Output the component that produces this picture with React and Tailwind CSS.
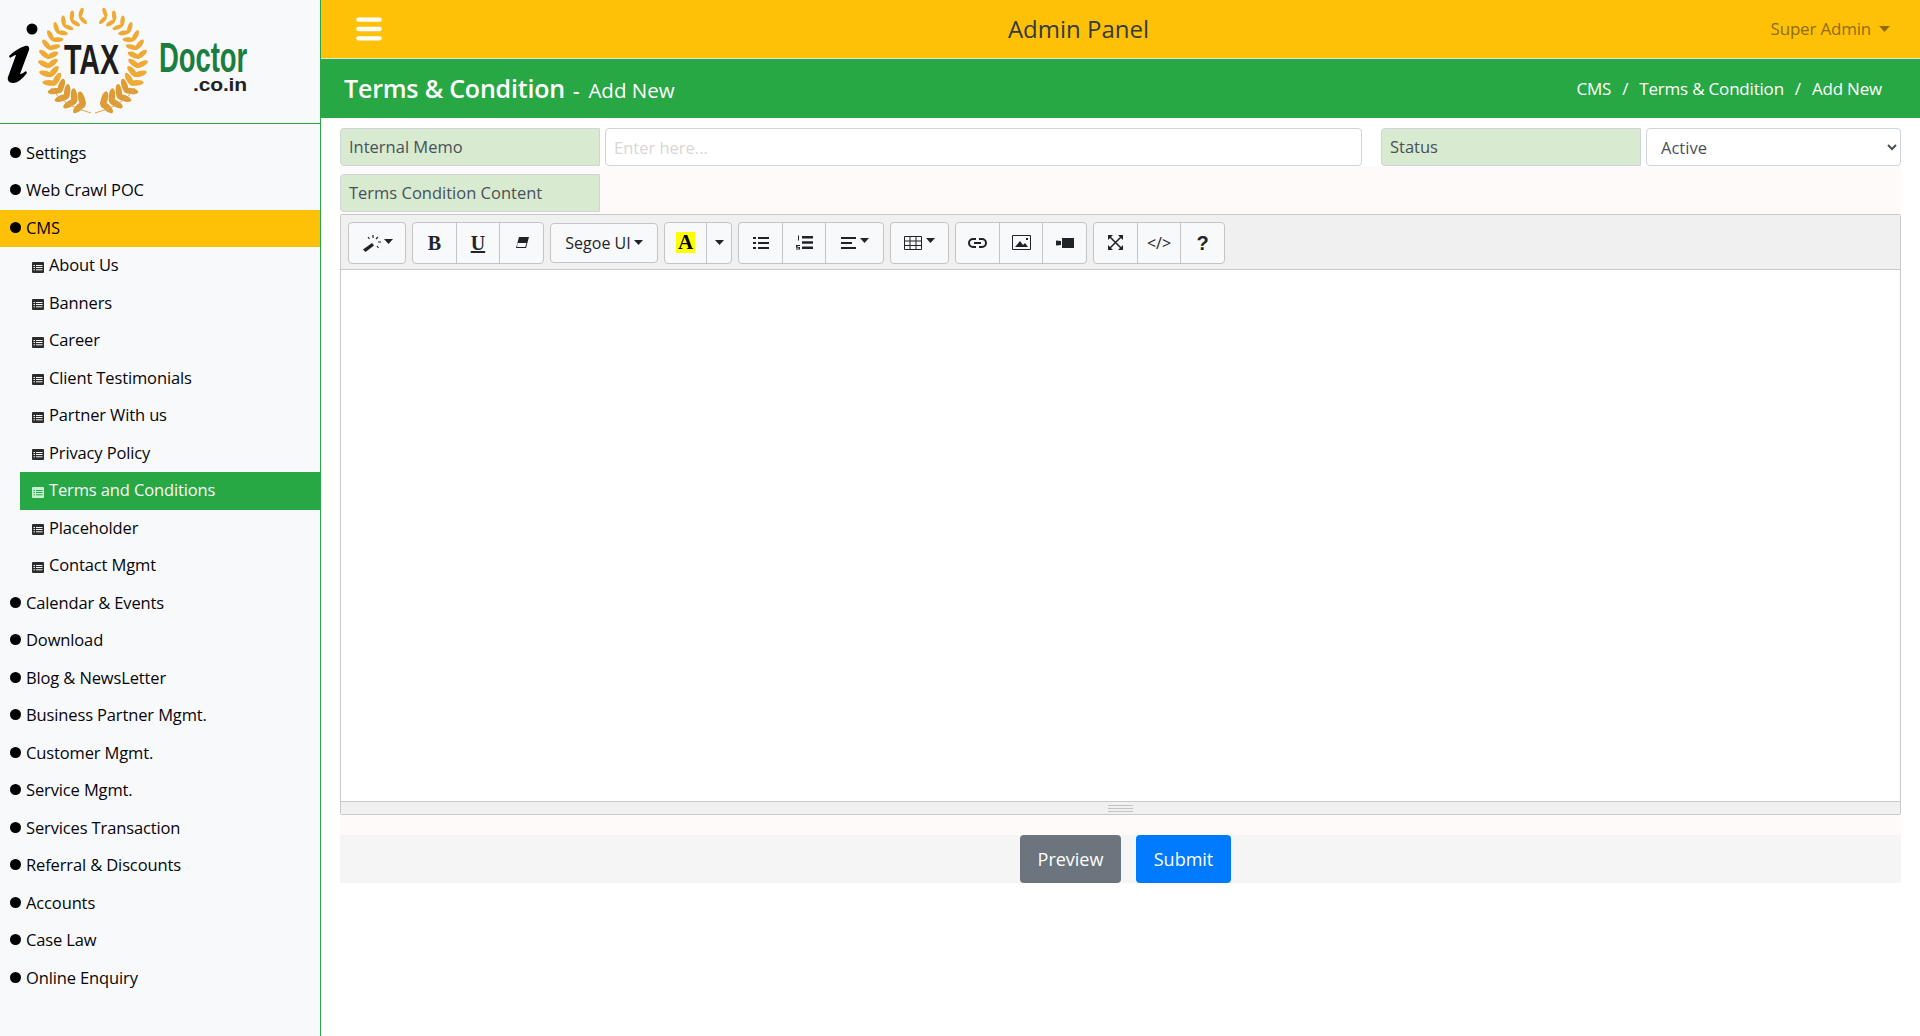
import React from 'react';
import { Menu } from 'lucide-react';

const topBefore = ['Settings', 'Web Crawl POC'];
const cmsItems = ['About Us', 'Banners', 'Career', 'Client Testimonials', 'Partner With us', 'Privacy Policy', 'Terms and Conditions', 'Placeholder', 'Contact Mgmt'];
const topAfter = ['Calendar & Events', 'Download', 'Blog & NewsLetter', 'Business Partner Mgmt.', 'Customer Mgmt.', 'Service Mgmt.', 'Services Transaction', 'Referral & Discounts', 'Accounts', 'Case Law', 'Online Enquiry'];

const Caret = ({ className = '', w = 9, h = 5 }) => (
  <svg width={w} height={h} viewBox="0 0 9 5" className={className}><path d="M0 0h9L4.500 5z" fill="currentColor" /></svg>
);

const Wreath = () => {
  const leaves = [];
  for (let side = -1; side <= 1; side += 2) {
    for (let i = 0; i < 14; i++) {
      const a = (i / 13) * 150 + 14;
      const rad = (a * Math.PI) / 180;
      const size = 0.95 + i * 0.05;
      [[41, 32], [49, -32]].forEach(([r, tilt]) => {
        const x = 93 + side * r * Math.sin(rad);
        const y = 60 - r * Math.cos(rad);
        const rot = side * (a + 90 + tilt);
        leaves.push(
          <ellipse key={`${side}-${i}-${r}`} cx={x} cy={y} rx={5.2 * size} ry={2.1 * size} transform={`rotate(${rot} ${x} ${y})`} fill={i > 9 ? '#dd9c35' : '#efa935'} />
        );
      });
    }
    leaves.push(<path key={`stem-${side}`} d={`M${93 + side * 2} 113 Q${93 + side * 30} 106 ${93 + side * 42} 88`} fill="none" stroke="#dfa650" strokeWidth="1" />);
  }
  return <g>{leaves}</g>;
};

const Logo = () => (
  <svg width="320" height="123" viewBox="0 0 320 123">
    <circle cx="32" cy="29" r="5.500" fill="#000" />
    <path d="M9 56c4-4 10-8 16-10 3-1 5 1 4 4l-9 24c2 0 4-2 6-3l1 2c-4 5-9 10-14 10-4 0-6-3-5-6l8-22c-2 0-4 2-6 3z" fill="#000" />
    <Wreath />
    <text x="64" y="74" fontFamily="'Liberation Sans', sans-serif" fontWeight="700" fontSize="42" fill="#1d1d1b" textLength="55" lengthAdjust="spacingAndGlyphs">TAX</text>
    <text x="159" y="72" fontFamily="'Liberation Sans', sans-serif" fontWeight="700" fontSize="42" fill="#1b7d3e" textLength="88" lengthAdjust="spacingAndGlyphs">Doctor</text>
    <text x="193" y="91" fontFamily="'Liberation Sans', sans-serif" fontWeight="700" fontSize="18" fill="#222" textLength="54" lengthAdjust="spacingAndGlyphs">.co.in</text>
  </svg>
);

const TableMark = ({ active }) => (
  <svg width="12" height="11" viewBox="0 0 12 11" className="mt-[3px] shrink-0">
    <rect width="12" height="11" rx="1" fill={active ? '#c8f0d2' : '#2b2b2b'} />
    <path d="M4 3.500h6.500M4 5.500h6.500M4 7.800h6.500" stroke={active ? '#28a745' : '#f8f9fa'} strokeWidth="1" />
    <path d="M1.500 3.500h1.500M1.500 5.500h1.500M1.500 7.800h1.500" stroke={active ? '#28a745' : '#f8f9fa'} strokeWidth="1" />
  </svg>
);

const TopItem = ({ label, active }) => (
  <div className={`flex h-[37.5px] items-center pl-[10px] text-[#06060a] ${active ? 'bg-[#ffc107]' : ''}`}>
    <span className="mb-[2px] mr-[5px] h-[11px] w-[11px] shrink-0 rounded-full bg-black" />
    <span>{label}</span>
  </div>
);

const SubItem = ({ label, active }) => (
  <div className={`ml-[20px] flex h-[37.5px] items-center pl-[12px] ${active ? 'bg-[#28a745] text-[#f8f9fa]' : 'text-[#06060a]'}`}>
    <TableMark active={active} />
    <span className="ml-[5px]">{label}</span>
  </div>
);

const Sidebar = () => (
  <aside className="flex w-[321px] shrink-0 flex-col border-r border-[#28a745] bg-[#f8f9fa] text-[16.5px] tracking-[-0.13px]">
    <div className="h-[124px] shrink-0 border-b border-[#28a745]">
      <Logo />
    </div>
    <nav className="pt-[10.500px]">
      {topBefore.map((t) => <TopItem key={t} label={t} />)}
      <TopItem label="CMS" active />
      {cmsItems.map((t) => <SubItem key={t} label={t} active={t === 'Terms and Conditions'} />)}
      {topAfter.map((t) => <TopItem key={t} label={t} />)}
    </nav>
  </aside>
);

const Label = ({ children, className = '' }) => (
  <div className={`flex h-[38px] w-[260px] shrink-0 items-center rounded-l-[4px] border border-[#ced4da] bg-[#d8ebd1] px-[8px] text-[16.5px] text-[#495057] ${className}`}>
    {children}
  </div>
);

const Icon = ({ children, w = 18, h = 18, vb = '0 0 18 18' }) => (
  <svg width={w} height={h} viewBox={vb} fill="#1f2328">{children}</svg>
);

const ToolBtn = ({ w, children, last }) => (
  <div className={`flex h-[40px] items-center justify-center ${last ? '' : 'border-r border-[#c4c4c4]'}`} style={{ width: w }}>
    {children}
  </div>
);

const Group = ({ children }) => (
  <div className="flex rounded-[4px] border border-[#c4c4c4] bg-[#f8f9fa] text-[#212529]">{children}</div>
);

const Toolbar = () => (
  <div className="flex h-[55px] items-center gap-[6px] border-b border-[#c9c9c9] bg-[#f0f0f0] pl-[7px] pt-[1px]">
    <Group>
      <ToolBtn w={56} last>
        <Icon w={24} h={20} vb="0 0 24 20">
          <path d="M1 16.500L10 10l2 2.500L3.500 19z" />
          <path d="M11 2v3M16 4l-2 2M6 4l1.500 2M15 13l1.500 2M16 9h3" stroke="#1f2328" strokeWidth="1.200" fill="none" />
        </Icon>
        <Caret className="-ml-[2px] mb-[3px]" />
      </ToolBtn>
    </Group>
    <Group>
      <ToolBtn w={44}><span className="font-['Liberation_Serif',serif] text-[20px] font-bold">B</span></ToolBtn>
      <ToolBtn w={43}><span className="font-['Liberation_Serif',serif] text-[20px] font-bold underline">U</span></ToolBtn>
      <ToolBtn w={43} last>
        <Icon w={14} h={12} vb="0 0 14 12">
          <path d="M4 0h10l-3 11H1z" />
          <path d="M2.500 6h9l-1.300 4H2z" fill="#f8f9fa" />
        </Icon>
      </ToolBtn>
    </Group>
    <Group>
      <div className="flex h-[38px] w-[106px] items-center justify-center gap-[3px] text-[16px]">
        <span>Segoe UI</span><Caret />
      </div>
    </Group>
    <Group>
      <ToolBtn w={42}><span className="bg-[#ffff00] px-[2px] font-['Liberation_Serif',serif] text-[21px] font-bold leading-[21px] text-black">A</span></ToolBtn>
      <ToolBtn w={24} last><Caret /></ToolBtn>
    </Group>
    <Group>
      <ToolBtn w={44}>
        <Icon w={16} h={14} vb="0 0 16 14">
          <path d="M0 1h3v2H0zM5 1h11v2H5zM0 6h3v2H0zM5 6h11v2H5zM0 11h3v2H0zM5 11h11v2H5z" />
        </Icon>
      </ToolBtn>
      <ToolBtn w={43}>
        <Icon w={17} h={15} vb="0 0 17 15">
          <path d="M6 1h11v2.500H6zM6 6.200h11v2.500H6zM6 11.500h11V14H6zM2 .5h1v5H2zM0 10h4v1H1.500v1H4v2.500H0v-1h3v-.7H0z" />
        </Icon>
      </ToolBtn>
      <ToolBtn w={57} last>
        <Icon w={15} h={14} vb="0 0 15 14"><path d="M0 1h15v2H0zM0 6h11v2H0zM0 11h15v2H0z" /></Icon>
        <Caret className="ml-[4px] mb-[4px]" />
      </ToolBtn>
    </Group>
    <Group>
      <ToolBtn w={57} last>
        <Icon w={18} h={14} vb="0 0 18 14">
          <path d="M.5.5h17v13H.5zM6 .5v13M12 .5v13M.5 5h17M.5 9.500h17" fill="none" stroke="#1f2328" strokeWidth="1" />
        </Icon>
        <Caret className="ml-[4px] mb-[4px]" />
      </ToolBtn>
    </Group>
    <Group>
      <ToolBtn w={44}>
        <Icon w={19} h={10} vb="0 0 19 10">
          <path d="M8 1H5a4 4 0 000 8h3M11 1h3a4 4 0 010 8h-3M6 5h7" fill="none" stroke="#1f2328" strokeWidth="2" />
        </Icon>
      </ToolBtn>
      <ToolBtn w={43}>
        <Icon w={19} h={15} vb="0 0 19 15">
          <path d="M.5.5h18v14H.5z" fill="none" stroke="#1f2328" strokeWidth="1" />
          <path d="M3 12l5-6 3 4 2-2 3 4zM14 3h2v2h-2z" />
        </Icon>
      </ToolBtn>
      <ToolBtn w={43} last>
        <Icon w={18} h={10} vb="0 0 18 10"><path d="M6 0h12v10H6zM0 2.500L5 3v4l-5 .5z" /></Icon>
      </ToolBtn>
    </Group>
    <Group>
      <ToolBtn w={44}>
        <Icon w={15} h={15} vb="0 0 15 15">
          <path d="M0 0h5L0 5zM15 0v5l-5-5zM0 15v-5l5 5zM15 15h-5l5-5z" />
          <path d="M2 2l11 11M13 2L2 13" stroke="#1f2328" strokeWidth="1.500" fill="none" />
        </Icon>
      </ToolBtn>
      <ToolBtn w={43}><span className="text-[16px]">&lt;/&gt;</span></ToolBtn>
      <ToolBtn w={43} last><span className="font-['Liberation_Sans',sans-serif] text-[20px] font-bold">?</span></ToolBtn>
    </Group>
  </div>
);

export default function App() {
  return (
    <div className="flex min-h-[1036px] bg-white font-['Open_Sans','Liberation_Sans',sans-serif]">
      <Sidebar />
      <main className="min-w-0 flex-1">
        <header className="relative flex h-[59px] items-center justify-between border-b border-[#e2e2e2] bg-[#ffc107] pl-[32px] pr-[30px]">
          <Menu size={32} strokeWidth={3.200} color="#fff" />
          <div className="absolute left-0 right-[84px] text-center text-[24px] font-medium text-[#343a40]">Admin Panel</div>
          <div className="flex items-center gap-[8px] text-[17px] tracking-[-0.2px] text-[#8f6d04]">
            <span>Super Admin</span><Caret w={11} h={6} />
          </div>
        </header>

        <div className="flex h-[59px] items-center justify-between bg-[#28a745] pl-[23px] pr-[38px] text-white">
          <div className="flex items-baseline">
            <span className="text-[25px] font-semibold tracking-[-0.2px]">Terms &amp; Condition</span>
            <span className="ml-[8px] text-[20px] font-semibold">-</span>
            <span className="ml-[9px] text-[20.500px]">Add New</span>
          </div>
          <div className="text-[17px] tracking-[-0.2px]">
            CMS<span className="mx-[11px]">/</span>Terms &amp; Condition<span className="mx-[11px]">/</span>Add New
          </div>
        </div>

        <div className="pl-[19px] pr-[19px] pt-[10px]">
          <div className="flex h-[38px] bg-white">
            <Label>Internal Memo</Label>
            <input placeholder="Enter here..." className="ml-[5px] h-[38px] w-[757px] rounded-[4px] border border-[#ced4da] bg-white px-[8px] text-[16.5px] placeholder:text-[#d8d6d6]" />
            <Label className="ml-[19px]">Status</Label>
            <select defaultValue="Active" className="ml-[5px] h-[38px] min-w-0 flex-1 rounded-[4px] border border-[#ced4da] bg-white px-[10px] text-[16.5px] text-[#495057]">
              <option>Active</option>
              <option>Inactive</option>
            </select>
          </div>

          <div className="bg-[#fffafa] pb-[20px] pt-[8px]">
            <Label>Terms Condition Content</Label>
            <div className="mt-[2px] rounded-[2px] border border-[#c9c9c9] bg-white">
              <Toolbar />
              <div className="h-[531px]" />
              <div className="flex h-[13px] flex-col items-center justify-center gap-[2px] border-t border-[#c9c9c9] bg-[#f0f0f0]">
                <div className="h-px w-[25px] bg-[#c4c4c4]" />
                <div className="h-px w-[25px] bg-[#c4c4c4]" />
                <div className="h-px w-[25px] bg-[#c4c4c4]" />
              </div>
            </div>
          </div>

          <div className="flex h-[48px] justify-center gap-[15px] bg-[#f5f5f5] pl-[10px] text-[18px] text-white">
            <button className="w-[101px] rounded-[4px] bg-[#6c757d]">Preview</button>
            <button className="w-[95px] rounded-[4px] bg-[#007bff]">Submit</button>
          </div>
        </div>
      </main>
    </div>
  );
}
